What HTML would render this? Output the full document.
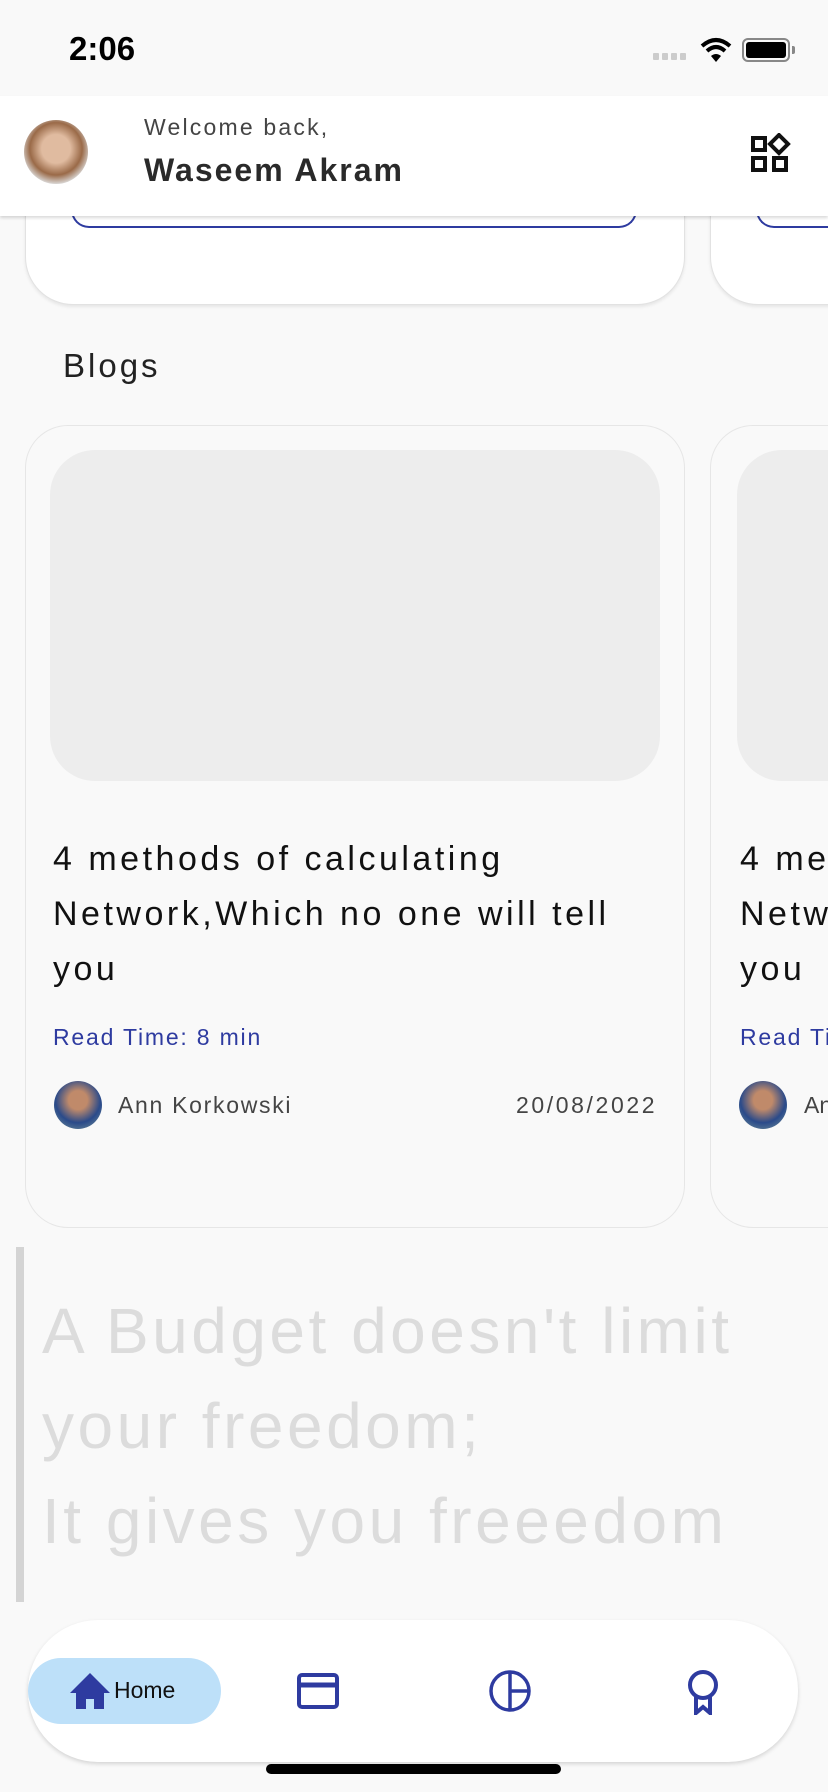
<!DOCTYPE html>
<html><head><meta charset="utf-8"><style>
*{margin:0;padding:0;box-sizing:border-box}
body{width:828px;height:1792px;background:#f9f9f9;font-family:"Liberation Sans",sans-serif;position:relative;overflow:hidden;color:#111}
.abs{position:absolute}
</style></head><body>
<div class="abs" style="left:69px;top:30px;font-size:33px;font-weight:bold;color:#000">2:06</div>
<div class="abs" style="left:653px;top:53px;display:flex;gap:3px"><i style="width:6px;height:7px;background:#ccc;display:block;border-radius:1px"></i><i style="width:6px;height:7px;background:#ccc;display:block;border-radius:1px"></i><i style="width:6px;height:7px;background:#ccc;display:block;border-radius:1px"></i><i style="width:6px;height:7px;background:#ccc;display:block;border-radius:1px"></i></div>
<svg class="abs" style="left:700px;top:36px" width="32" height="28" viewBox="0 0 32 28"><path d="M2 10 Q16 -2 30 10" stroke="#000" stroke-width="4" fill="none"/><path d="M7 15 Q16 7 25 15" stroke="#000" stroke-width="4" fill="none"/><path d="M11 20 Q16 16 21 20 L16 26Z" fill="#000"/></svg>
<div class="abs" style="left:742px;top:38px;width:48px;height:24px;border:2px solid #888;border-radius:6px;padding:2px"><div style="width:100%;height:100%;background:#000;border-radius:3px"></div></div>
<div class="abs" style="left:792px;top:46px;width:3px;height:8px;background:#888;border-radius:0 2px 2px 0"></div>

<div class="abs" style="left:25px;top:180px;width:660px;height:125px;background:#fff;border-radius:0 0 48px 48px;border:1px solid #e2e2e2;border-top:none;box-shadow:0 2px 3px rgba(0,0,0,.08)"></div>
<div class="abs" style="left:71px;top:190px;width:566px;height:38px;border:2px solid #2e3ba0;border-top:none;border-radius:0 0 18px 18px"></div>
<div class="abs" style="left:710px;top:180px;width:140px;height:125px;background:#fff;border-radius:0 0 0 48px;border:1px solid #e2e2e2;border-top:none;box-shadow:0 2px 3px rgba(0,0,0,.08)"></div>
<div class="abs" style="left:756px;top:190px;width:100px;height:38px;border:2px solid #2e3ba0;border-top:none;border-right:none;border-radius:0 0 0 18px"></div>

<div class="abs" style="left:0;top:96px;width:828px;height:120px;background:#fff;box-shadow:0 2px 3px rgba(0,0,0,.15)"></div>
<div class="abs" style="left:24px;top:120px;width:64px;height:64px;border-radius:50%;background:radial-gradient(circle at 50% 45%,#e0bba0 0 30%,#9a6a48 55%,#ddd 75%)"></div>
<div class="abs" style="left:144px;top:114px;font-size:23px;color:#444;letter-spacing:2.2px">Welcome back,</div>
<div class="abs" style="left:144px;top:152px;font-size:32px;font-weight:bold;color:#2a2a2a;letter-spacing:2px">Waseem Akram</div>
<svg class="abs" style="left:750px;top:133px" width="42" height="42" viewBox="0 0 42 42" fill="none" stroke="#111" stroke-width="4"><rect x="3" y="5" width="12" height="12"/><path d="M29 2 L38 11 L29 20 L20 11Z"/><rect x="3" y="25" width="12" height="12"/><rect x="24" y="25" width="12" height="12"/></svg>

<div class="abs" style="left:63px;top:347px;font-size:33px;color:#222;letter-spacing:3px">Blogs</div>

<div class="abs" style="left:25px;top:425px;width:660px;height:803px;border:1px solid #e6e6e6;border-radius:43px"></div>
<div class="abs" style="left:50px;top:450px;width:610px;height:331px;background:#ededed;border-radius:45px"></div>
<div class="abs" style="left:53px;top:832px;font-size:34px;line-height:55px;color:#111;width:640px;letter-spacing:3.5px">4 methods of calculating<br>Network,Which no one will tell<br>you</div>
<div class="abs" style="left:53px;top:1024px;font-size:23px;color:#2e3ba0;letter-spacing:1.8px">Read Time: 8 min</div>
<div class="abs" style="left:54px;top:1081px;width:48px;height:48px;border-radius:50%;background:radial-gradient(circle at 50% 40%,#c08a6a 0 25%,#2a4a8a 60%,#7a9a9a)"></div>
<div class="abs" style="left:118px;top:1092px;font-size:23px;color:#444;letter-spacing:1.7px">Ann Korkowski</div>
<div class="abs" style="left:516px;top:1092px;font-size:23px;color:#444;letter-spacing:2.6px">20/08/2022</div>

<div class="abs" style="left:710px;top:425px;width:200px;height:803px;border:1px solid #e6e6e6;border-radius:43px"></div>
<div class="abs" style="left:737px;top:450px;width:200px;height:331px;background:#ededed;border-radius:45px"></div>
<div class="abs" style="left:740px;top:832px;font-size:34px;line-height:55px;white-space:nowrap;letter-spacing:3.5px">4 me<br>Netw<br>you</div>
<div class="abs" style="left:740px;top:1024px;font-size:23px;color:#2e3ba0;white-space:nowrap;letter-spacing:1.8px">Read Ti</div>
<div class="abs" style="left:739px;top:1081px;width:48px;height:48px;border-radius:50%;background:radial-gradient(circle at 50% 40%,#c08a6a 0 25%,#2a4a8a 60%,#7a9a9a)"></div>
<div class="abs" style="left:804px;top:1092px;font-size:23px;color:#444">An</div>

<div class="abs" style="left:16px;top:1247px;width:8px;height:355px;background:#d4d4d4"></div>
<div class="abs" style="left:42px;top:1284px;font-size:64px;line-height:95px;color:#dcdcdc;white-space:nowrap;letter-spacing:3.5px">A Budget doesn't limit<br>your freedom;<br>It gives you freeedom</div>

<div class="abs" style="left:28px;top:1620px;width:770px;height:142px;background:#fff;border-radius:70px;box-shadow:0 2px 4px rgba(0,0,0,.15)"></div>
<div class="abs" style="left:28px;top:1658px;width:193px;height:66px;background:#bde0f9;border-radius:33px"></div>
<svg class="abs" style="left:70px;top:1673px" width="40" height="36" viewBox="0 0 40 36"><path d="M20 0 L40 20 L34 20 L34 36 L24 36 L24 26 L16 26 L16 36 L6 36 L6 20 L0 20Z" fill="#2e3ba0"/></svg>
<div class="abs" style="left:114px;top:1677px;font-size:23px;color:#111">Home</div>
<svg class="abs" style="left:297px;top:1673px" width="42" height="36" viewBox="0 0 42 36" fill="none" stroke="#2e3ba0" stroke-width="4"><rect x="2" y="2" width="38" height="32" rx="3"/><path d="M2 12 H40" stroke-width="5"/></svg>
<svg class="abs" style="left:488px;top:1669px" width="44" height="44" viewBox="0 0 44 44" fill="none" stroke="#2e3ba0" stroke-width="3.5"><circle cx="22" cy="22" r="19"/><path d="M22 3 V41 M22 22 H41"/></svg>
<svg class="abs" style="left:687px;top:1669px" width="32" height="46" viewBox="0 0 32 46" fill="none" stroke="#2e3ba0" stroke-width="4"><circle cx="16" cy="16" r="13"/><path d="M9 28 V44 L16 38 L23 44 V28"/></svg>
<div class="abs" style="left:266px;top:1764px;width:295px;height:10px;background:#000;border-radius:5px"></div>
</body></html>
